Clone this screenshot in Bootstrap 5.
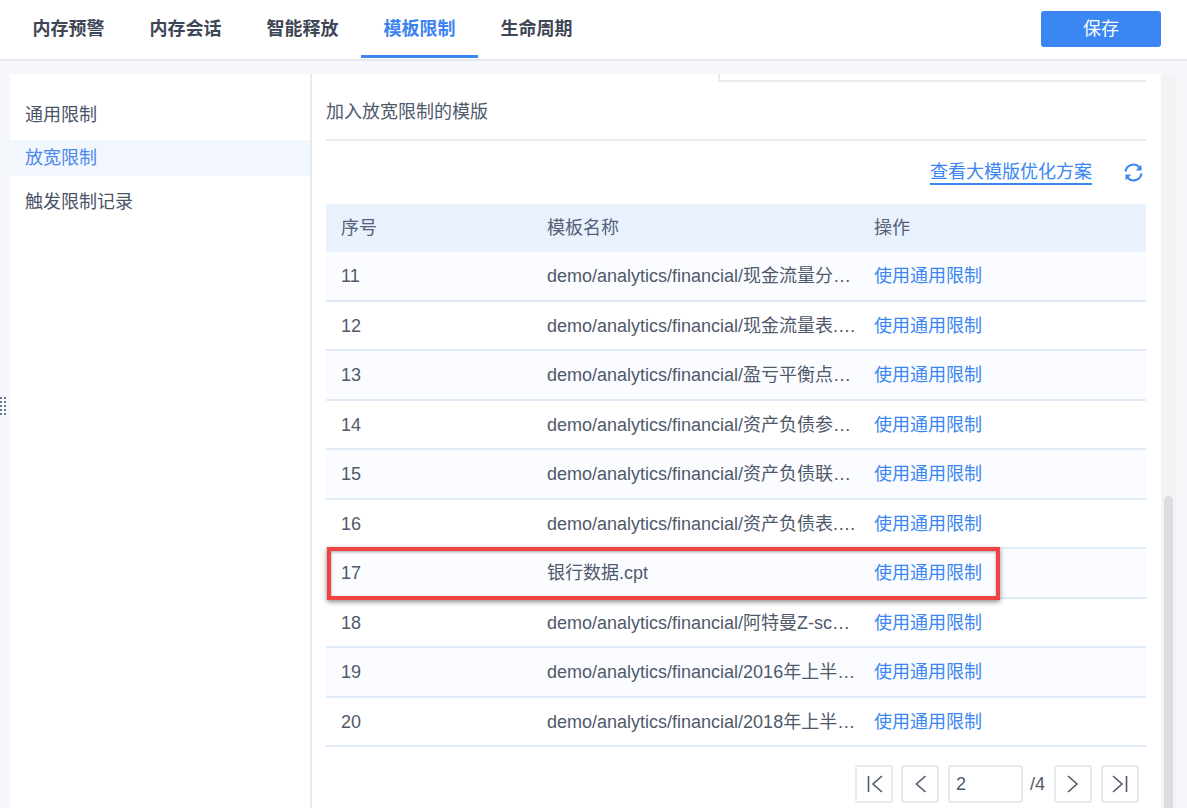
<!DOCTYPE html>
<html lang="zh">
<head>
<meta charset="utf-8">
<link rel="stylesheet" href="https://cdn.jsdelivr.net/npm/bootstrap@5.3.0/dist/css/bootstrap.min.css">
<style>
html,body{height:100%;overflow:hidden}
body{background:#f5f7fa;font-family:"Liberation Sans","Noto Sans CJK SC",sans-serif;font-size:18px;color:#4a5468;width:1187px;height:808px;position:relative}
.topbar{height:61px;background:#fff;border-bottom:2px solid #e6e7ea;padding-left:10px;padding-right:26px}
.tabitem{display:block;width:117px;height:58px;line-height:58px;text-align:center;font-weight:700;font-size:18px;color:#3f4757;text-decoration:none;border-bottom:3px solid transparent}
.tabitem.sel{color:#3d84f0;border-bottom-color:#3a86f2}
.savebtn{width:120px;height:36px;padding:0;background:#3a86f2;border:0;border-radius:3px;color:#fff;font-size:18px;margin-top:-1px}
.mainarea{height:747px;padding:13px 11px 0 10px}
.sidecol{width:300px;background:#fff;padding-top:23px}
.sideitem{height:36px;line-height:37px;padding-left:15px;color:#4a5468;font-size:18px;margin-bottom:7px}
.sideitem.sel{background:#f2f6fd;color:#4a87ee;margin-bottom:8px}
.contentcol{width:851px;background:#fff;border-left:2px solid #e9eaee;padding-left:14px;padding-right:15px}
.stub{height:8px;margin-left:392px;border-bottom:2px solid #e9eaee;border-left:2px solid #e9eaee}
.sectitle{height:59px;border-bottom:2px solid #e9eaee;line-height:60px;font-size:18px;color:#4f596c}
.toolrow{height:63px;padding-right:3px}
.biglink{font-size:18px;color:#3a86f2;border-bottom:2px solid #3a86f2;line-height:22px;text-decoration:none;margin-top:20px}
.refreshico{width:19px;height:19px;margin:22px 0 0 32px;display:block}
.grid-table{width:820px;table-layout:fixed;margin:0;border-collapse:separate;border-spacing:0}
.grid-table th{background:#e9f1fc;height:48px;font-weight:400;font-size:18px;color:#55607a;padding:0 0 0 15px;vertical-align:middle}
.grid-table td{height:49.5px;padding:2px 3px 0 15px;font-size:18px;color:#4f596c;border-bottom:2px solid #e0ebf8;background:#fff;vertical-align:middle;white-space:nowrap;overflow:hidden;text-overflow:ellipsis}
.grid-table tr.alt td{background:#fbfcff}
.grid-table td.op{color:#3a86f2}
.grid-table th:last-child,.grid-table td:last-child{padding-left:14px}
.colnum{width:206px}.colname{width:328px}
.callout{position:absolute;left:327px;top:547px;width:673px;height:53px;border:4px solid #f04444;box-shadow:0 2px 5px rgba(0,0,0,.45),inset 0 1px 3px rgba(0,0,0,.35);pointer-events:none}
.pager{padding:18px 7px 0 0;font-size:18px;color:#4f596c}
.pagebtn{width:38px;height:38px;background:#fff;border:2px solid #e9eaee;border-radius:3px;display:flex;align-items:center;justify-content:center;padding:0}
.pagenum{width:75px;height:38px;border:2px solid #e9eaee;border-radius:3px;padding:0 0 0 6px;font-size:18px;color:#4f596c;line-height:34px;margin-left:9px}
.pagetotal{width:31px;padding-left:7px}
.pagegap{margin-left:8px}
.pagegap9{margin-left:9px}
.scrolltrack{position:absolute;left:1161px;top:74px;width:15px;height:734px;background:#f3f3f4;border-radius:7px 7px 0 0}
.scrollthumb{position:absolute;left:3px;right:3px;top:422px;bottom:0;background:#dcdde1;border-radius:5px 5px 0 0}
.grip{position:absolute;left:0;top:397px;width:7px;height:18px}
</style>
</head>
<body>
<div class="topbar d-flex justify-content-between align-items-center">
  <div class="d-flex align-self-start">
    <a class="tabitem">内存预警</a>
    <a class="tabitem">内存会话</a>
    <a class="tabitem">智能释放</a>
    <a class="tabitem sel">模板限制</a>
    <a class="tabitem">生命周期</a>
  </div>
  <button class="savebtn btn">保存</button>
</div>
<div class="mainarea d-flex">
  <div class="sidecol">
    <div class="sideitem">通用限制</div>
    <div class="sideitem sel">放宽限制</div>
    <div class="sideitem">触发限制记录</div>
  </div>
  <div class="contentcol">
    <div class="stub"></div>
    <div class="sectitle">加入放宽限制的模版</div>
    <div class="toolrow d-flex justify-content-end align-items-start">
      <a class="biglink">查看大模版优化方案</a>
      <svg class="refreshico" viewBox="0 0 20 20" fill="none" stroke="#3a86f2" stroke-width="2.2">
        <path d="M1.6 9a8.4 8.4 0 0 1 14.6-4.6"/><path d="M18.4 11a8.4 8.4 0 0 1-14.6 4.6"/>
        <path d="M18.4 1.8v6h-6z" fill="#3a86f2" stroke="none"/><path d="M1.6 18.2v-6h6z" fill="#3a86f2" stroke="none"/>
      </svg>
    </div>
    <table class="grid-table">
      <thead><tr><th class="colnum">序号</th><th class="colname">模板名称</th><th>操作</th></tr></thead>
      <tbody>
        <tr class="alt"><td>11</td><td>demo/analytics/financial/现金流量分析.cpt</td><td class="op">使用通用限制</td></tr>
        <tr><td>12</td><td>demo/analytics/financial/现金流量表.cpt</td><td class="op">使用通用限制</td></tr>
        <tr class="alt"><td>13</td><td>demo/analytics/financial/盈亏平衡点分析.cpt</td><td class="op">使用通用限制</td></tr>
        <tr><td>14</td><td>demo/analytics/financial/资产负债参数表.cpt</td><td class="op">使用通用限制</td></tr>
        <tr class="alt"><td>15</td><td>demo/analytics/financial/资产负债联动表.cpt</td><td class="op">使用通用限制</td></tr>
        <tr><td>16</td><td>demo/analytics/financial/资产负债表.cpt</td><td class="op">使用通用限制</td></tr>
        <tr class="alt"><td>17</td><td>银行数据.cpt</td><td class="op">使用通用限制</td></tr>
        <tr><td>18</td><td>demo/analytics/financial/阿特曼Z-score分析.cpt</td><td class="op">使用通用限制</td></tr>
        <tr class="alt"><td>19</td><td>demo/analytics/financial/2016年上半年分析.cpt</td><td class="op">使用通用限制</td></tr>
        <tr><td>20</td><td>demo/analytics/financial/2018年上半年分析.cpt</td><td class="op">使用通用限制</td></tr>
      </tbody>
    </table>
    <div class="pager d-flex justify-content-end align-items-center">
      <button class="pagebtn"><svg width="18" height="20" viewBox="0 0 18 20" fill="none" stroke="#4f596c" stroke-width="1.6"><path d="M3.5 2v16M17 2l-9 8 9 8"/></svg></button>
      <button class="pagebtn pagegap"><svg width="14" height="20" viewBox="0 0 14 20" fill="none" stroke="#4f596c" stroke-width="1.6"><path d="M12.5 2l-9 8 9 8"/></svg></button>
      <div class="pagenum">2</div>
      <div class="pagetotal">/4</div>
      <button class="pagebtn"><svg width="14" height="20" viewBox="0 0 14 20" fill="none" stroke="#4f596c" stroke-width="1.6"><path d="M2 2l9 8-9 8"/></svg></button>
      <button class="pagebtn pagegap9"><svg width="18" height="20" viewBox="0 0 18 20" fill="none" stroke="#4f596c" stroke-width="1.6"><path d="M2 2l9 8-9 8M15.5 2v16"/></svg></button>
    </div>
  </div>
</div>
<div class="callout"></div>
<div class="scrolltrack"><div class="scrollthumb"></div></div>
<svg class="grip" viewBox="0 0 7 18"><g fill="#6b7894"><rect x="0" y="0" width="2" height="2"/><rect x="4" y="0" width="2" height="2"/><rect x="0" y="4" width="2" height="2"/><rect x="4" y="4" width="2" height="2"/><rect x="0" y="8" width="2" height="2"/><rect x="4" y="8" width="2" height="2"/><rect x="0" y="12" width="2" height="2"/><rect x="4" y="12" width="2" height="2"/><rect x="0" y="16" width="2" height="2"/><rect x="4" y="16" width="2" height="2"/></g></svg>
<script src="https://cdn.jsdelivr.net/npm/bootstrap@5.3.0/dist/js/bootstrap.bundle.min.js"></script>
</body>
</html>
